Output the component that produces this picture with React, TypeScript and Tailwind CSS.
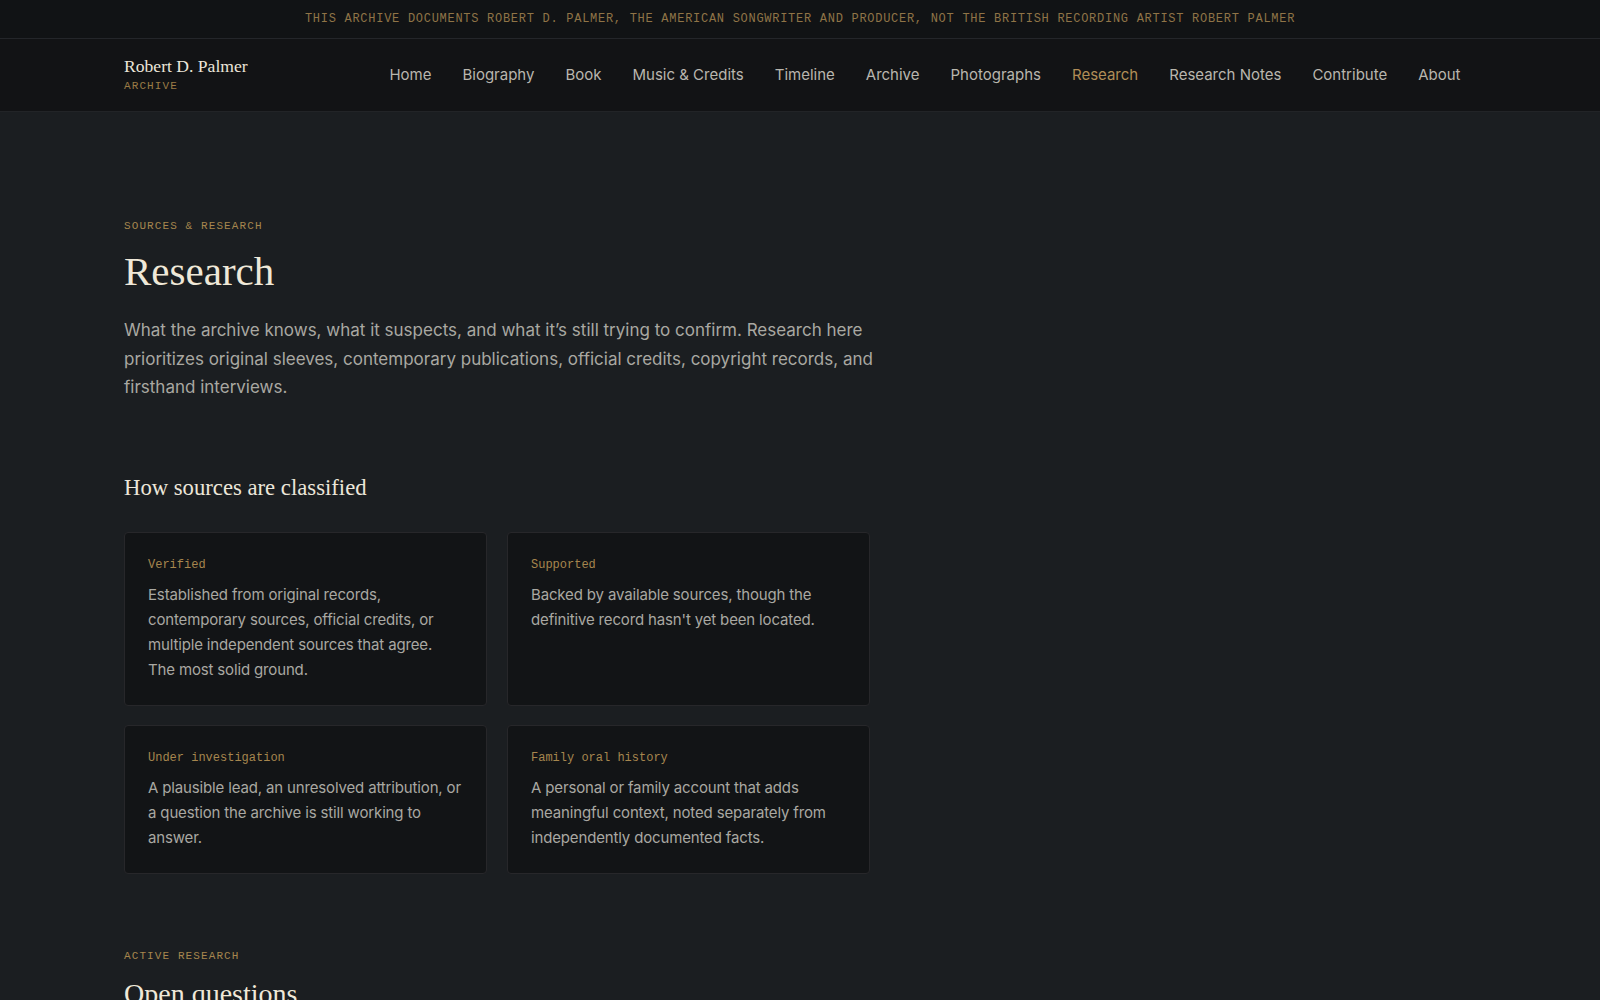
const NAV = [
  "Home",
  "Biography",
  "Book",
  "Music & Credits",
  "Timeline",
  "Archive",
  "Photographs",
  "Research",
  "Research Notes",
  "Contribute",
  "About",
];

const CLASSES = [
  {
    label: "Verified",
    text: "Established from original records, contemporary sources, official credits, or multiple independent sources that agree. The most solid ground.",
  },
  {
    label: "Supported",
    text: "Backed by available sources, though the definitive record hasn't yet been located.",
  },
  {
    label: "Under investigation",
    text: "A plausible lead, an unresolved attribution, or a question the archive is still working to answer.",
  },
  {
    label: "Family oral history",
    text: "A personal or family account that adds meaningful context, noted separately from independently documented facts.",
  },
];

const serif = "font-['Liberation_Serif',Georgia,serif]";
const mono = "font-['Liberation_Mono',monospace]";

function Eyebrow({ children }: { children: React.ReactNode }) {
  return (
    <p
      className={`${mono} text-[11px] uppercase leading-4 tracking-[0.1em] text-[#a6864e]`}
    >
      {children}
    </p>
  );
}

export default function App() {
  return (
    <div className="min-h-screen bg-[#1b1e21] font-['Inter',sans-serif]">
      <div className="flex h-[39px] items-center justify-center border-b border-[#24262a] bg-[#111315]">
        <p
          className={`${mono} text-[12px] tracking-[0.06em] text-[#8f7447]`}
        >
          THIS ARCHIVE DOCUMENTS ROBERT D. PALMER, THE AMERICAN SONGWRITER AND
          PRODUCER, NOT THE BRITISH RECORDING ARTIST ROBERT PALMER
        </p>
      </div>

      <header className="border-b border-[#222427] bg-[#121315]">
        <div className="mx-auto flex h-[72px] max-w-[1400px] items-center justify-between px-6">
          <div className="-mt-[2px]">
            <p className={`${serif} text-[17.6px] leading-[22px] text-[#ece6da]`}>
              Robert D. Palmer
            </p>
            <p
              className={`${mono} mt-[2px] text-[11px] leading-[14px] tracking-[0.1em] text-[#9a7b46]`}
            >
              ARCHIVE
            </p>
          </div>
          <nav className="flex items-center">
            {NAV.map((item) => (
              <a
                key={item}
                href="#"
                className={`px-[15.5px] text-[15px] ${
                  item === "Research" ? "text-[#b08d57]" : "text-[#b9b6ae]"
                }`}
              >
                {item}
              </a>
            ))}
          </nav>
        </div>
      </header>

      <main className="mx-auto max-w-[1400px] px-6 pt-[106px] pb-16">
        <Eyebrow>Sources &amp; Research</Eyebrow>
        <h1
          className={`${serif} mt-[13px] text-[41px] leading-[48px] text-[#efe8d8]`}
        >
          Research
        </h1>
        <p className="mt-[21px] max-w-[780px] text-[17px] leading-[28.5px] text-[#a9a8a2]">
          What the archive knows, what it suspects, and what it’s still trying
          to confirm. Research here prioritizes original sleeves, contemporary
          publications, official credits, copyright records, and firsthand
          interviews.
        </p>

        <h2
          className={`${serif} mt-[71px] text-[22.7px] leading-[30px] text-[#ece6da]`}
        >
          How sources are classified
        </h2>

        <div className="mt-[29px] grid w-[746px] grid-cols-2 gap-x-5 gap-y-[19px]">
          {CLASSES.map((c) => (
            <div
              key={c.label}
              className="rounded border border-[#27272a] bg-[#121416] p-[23px]"
            >
              <p className={`${mono} text-[12px] leading-[18px] text-[#a6864e]`}>
                {c.label}
              </p>
              <p className="mt-2 text-[15px] leading-[25px] tracking-[-0.01em] text-[#a9a8a2]">
                {c.text}
              </p>
            </div>
          ))}
        </div>

        <div className="mt-[74px]">
          <Eyebrow>Active Research</Eyebrow>
          <h2
            className={`${serif} mt-[13px] text-[28px] leading-[34px] text-[#efe8d8]`}
          >
            Open questions
          </h2>
        </div>
      </main>
    </div>
  );
}
